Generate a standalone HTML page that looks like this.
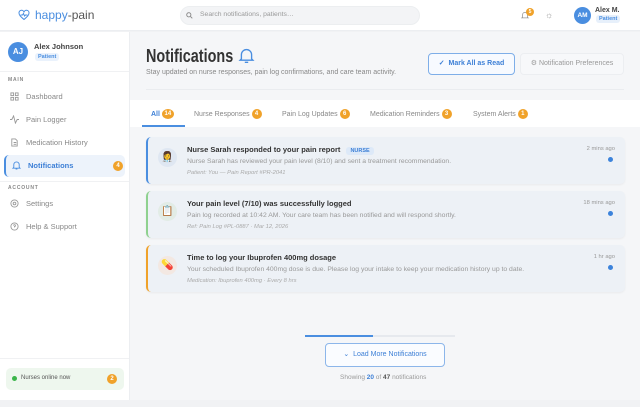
<!DOCTYPE html>
<html><head><style>
*{box-sizing:border-box;margin:0;padding:0}
body{width:640px;height:407px;overflow:hidden;font-family:"Liberation Sans",sans-serif;background:#f1f2f4;position:relative;color:#333}
.hdr{position:absolute;left:0;top:0;width:640px;height:31px;background:#fff;border-bottom:1px solid #eceef1}
.side{position:absolute;left:0;top:32px;width:130px;height:368px;background:#fff;border-right:1px solid #eceef1}
.main{position:absolute;left:130px;top:32px;width:510px;height:368px;background:#f5f6f8}
.a{position:absolute}
.badge{display:inline-block;background:#f0a22a;color:#fff;border-radius:50%;width:10px;height:10px;font-size:6px;line-height:10px;text-align:center;font-weight:bold;vertical-align:middle}
.nav{position:absolute;left:4px;width:121px;height:22px;font-size:7.5px;color:#888;line-height:22px;padding-left:22px}
.nav svg{position:absolute;left:6px;top:6px}
.card{position:absolute;left:146px;width:479px;height:47px;background:#edf1f6;border-radius:5px;box-shadow:0 1px 2px rgba(0,0,0,.05)}
.card .ic{position:absolute;left:10px;top:11px;width:19px;height:19px;border-radius:50%;font-size:10px;text-align:center;line-height:19px}
.card .t{position:absolute;left:39px;top:8px;font-size:7.5px;font-weight:bold;color:#333}
.card .d{position:absolute;left:39px;top:21px;font-size:6.8px;color:#999}
.card .m{position:absolute;left:39px;top:33px;font-size:5.8px;color:#aaa;font-style:italic}
.card .tm{position:absolute;right:10px;top:9px;font-size:5.8px;color:#999}
.card .dot{position:absolute;right:12px;top:20px;width:5px;height:5px;border-radius:50%;background:#3c83db}
.tab{position:absolute;top:109px;font-size:7px;color:#888}
</style></head><body>
<div class="hdr">
 <svg class="a" style="left:18px;top:9px" width="12" height="12" viewBox="0 0 24 24" fill="none" stroke="#4a8ee0" stroke-width="2"><path d="M12 21C5 15 2 12 2 8a5 5 0 0 1 10-1 5 5 0 0 1 10 1c0 4-3 7-10 13z"/><path d="M5 12h4l2-3 2 5 2-2h4"/></svg>
 <div class="a" style="left:35px;top:8px;font-size:12px;color:#555"><span style="color:#4a8ee0">happy</span>-pain</div>
 <div class="a" style="left:180px;top:6px;width:240px;height:19px;background:#f3f4f6;border-radius:10px;border:1px solid #eceef0"></div>
 <svg class="a" style="left:186px;top:12px" width="7" height="7" viewBox="0 0 10 10" fill="none" stroke="#888" stroke-width="1.3"><circle cx="4" cy="4" r="3"/><path d="M6.5 6.5L9 9"/></svg>
 <div class="a" style="left:200px;top:11px;font-size:6.8px;color:#999">Search notifications, patients…</div>
 <svg class="a" style="left:521px;top:11px" width="8" height="9" viewBox="0 0 10 10" fill="none" stroke="#999" stroke-width="1"><path d="M2 7V4a3 3 0 0 1 6 0v3l1 1H1z"/></svg>
 <div class="a badge" style="left:526px;top:8px;width:8px;height:8px;line-height:8px;font-size:5px">5</div>
 <div class="a" style="left:545px;top:11px;font-size:9px;color:#999;line-height:9px">☼</div>
 <div class="a" style="left:574px;top:7px;width:17px;height:17px;border-radius:50%;background:#4a8ee0;color:#fff;font-size:6.5px;font-weight:bold;text-align:center;line-height:17px">AM</div>
 <div class="a" style="left:595px;top:7px;font-size:7px;font-weight:bold;color:#444">Alex M.</div>
 <div class="a" style="left:596px;top:15px;font-size:5.5px;color:#4a8ee0;background:#e7f0fb;padding:1px 3px;border-radius:3px;font-weight:bold">Patient</div>
</div>
<div class="side">
 <div class="a" style="left:8px;top:10px;width:20px;height:20px;border-radius:50%;background:#4a8ee0;color:#fff;font-size:8px;font-weight:bold;text-align:center;line-height:20px">AJ</div>
 <div class="a" style="left:34px;top:10px;font-size:7.5px;font-weight:bold;color:#444">Alex Johnson</div>
 <div class="a" style="left:35px;top:21px;font-size:5.5px;color:#4a8ee0;background:#eaf2fc;padding:1px 3px;border-radius:3px;font-weight:bold">Patient</div>
 <div class="a" style="left:0;top:39px;width:129px;border-top:1px solid #f0f1f3"></div>
 <div class="a" style="left:8px;top:45px;font-size:5px;color:#888;letter-spacing:.8px;font-weight:bold">MAIN</div>
 <div class="nav" style="top:54px"><svg width="9" height="9" viewBox="0 0 10 10" fill="none" stroke="#999"><rect x="1" y="1" width="3" height="3"/><rect x="6" y="1" width="3" height="3"/><rect x="1" y="6" width="3" height="3"/><rect x="6" y="6" width="3" height="3"/></svg>Dashboard</div>
 <div class="nav" style="top:77px"><svg width="9" height="9" viewBox="0 0 10 10" fill="none" stroke="#999"><path d="M0 5h2l2-4 2 8 2-4h2"/></svg>Pain Logger</div>
 <div class="nav" style="top:100px"><svg width="9" height="9" viewBox="0 0 10 10" fill="none" stroke="#999"><path d="M2 1h4l2 2v6H2z M4 5h3M4 7h3"/></svg>Medication History</div>
 <div class="nav" style="top:123px;background:#edf3fb;border-radius:5px;color:#3c7fd6;font-weight:bold;border-left:2px solid #4a8ee0"><svg width="9" height="9" viewBox="0 0 10 10" fill="none" stroke="#4a8ee0"><path d="M2 7V4a3 3 0 0 1 6 0v3l1 1H1z M4 9h2"/></svg>Notifications<span class="badge a" style="left:107px;top:6px">4</span></div>
 <div class="a" style="left:0;top:149px;width:129px;border-top:1px solid #f0f1f3"></div>
 <div class="a" style="left:8px;top:153px;font-size:5px;color:#888;letter-spacing:.8px;font-weight:bold">ACCOUNT</div>
 <div class="nav" style="top:161px"><svg width="9" height="9" viewBox="0 0 10 10" fill="none" stroke="#999"><circle cx="5" cy="5" r="4"/><circle cx="5" cy="5" r="1.5"/></svg>Settings</div>
 <div class="nav" style="top:184px"><svg width="9" height="9" viewBox="0 0 10 10" fill="none" stroke="#999"><circle cx="5" cy="5" r="4"/><path d="M4 4a1 1 0 1 1 1 1v1"/></svg>Help &amp; Support</div>
 <div class="a" style="left:0;top:326px;width:129px;border-top:1px solid #f0f1f3"></div>
 <div class="a" style="left:6px;top:336px;width:118px;height:22px;background:#eef7ee;border-radius:5px"></div>
 <div class="a" style="left:12px;top:344px;width:5px;height:5px;border-radius:50%;background:#3bb54a"></div>
 <div class="a" style="left:21px;top:343px;font-size:6px;color:#555">Nurses online now</div>
 <div class="a badge" style="left:107px;top:342px">2</div>
</div>
<div class="main"></div>
<div class="a" style="left:146px;top:46px;font-size:18px;font-weight:bold;color:#333;transform:scaleX(0.8);transform-origin:0 0;white-space:nowrap">Notifications</div>
<svg class="a" style="left:238px;top:47px" width="17" height="17" viewBox="0 0 20 20" fill="none" stroke="#4a8ee0" stroke-width="1.6"><path d="M4 14V9a6 6 0 0 1 12 0v5l1.5 1.5h-15z M8 18h4"/></svg>
<div class="a" style="left:146px;top:69px;font-size:7px;color:#888">Stay updated on nurse responses, pain log confirmations, and care team activity.</div>
<div class="a" style="left:428px;top:53px;width:87px;height:22px;border:1px solid #7eaee8;border-radius:4px;background:#f7faff;font-size:7px;color:#3c7fd6;font-weight:bold;text-align:center;line-height:20px">✓&nbsp; Mark All as Read</div>
<div class="a" style="left:520px;top:53px;width:104px;height:22px;border:1px solid #eceef1;border-radius:4px;background:#f7f8fa;font-size:7px;color:#999;text-align:center;line-height:20px">⚙ Notification Preferences</div>
<div class="a" style="left:146px;top:89px;width:478px;border-top:1px solid #eaecef"></div>
<div class="a" style="left:130px;top:100px;width:510px;height:27px;background:#fff"></div>
<div class="a" style="left:142px;top:125px;width:43px;height:2px;background:#4a8ee0"></div>
<div class="tab" style="left:151px;color:#3c7fd6;font-weight:bold">All <span class="badge" style="width:12px">14</span></div>
<div class="tab" style="left:194px">Nurse Responses <span class="badge">4</span></div>
<div class="tab" style="left:282px">Pain Log Updates <span class="badge">6</span></div>
<div class="tab" style="left:370px">Medication Reminders <span class="badge">3</span></div>
<div class="tab" style="left:473px">System Alerts <span class="badge">1</span></div>

<div class="card" style="top:137px;border-left:2px solid #4a8ee0"><div class="ic" style="background:#dfe7f2">👩‍⚕️</div><div class="t">Nurse Sarah responded to your pain report <span style="font-size:5.5px;color:#3c7fd6;background:#dde9f8;padding:1px 4px;border-radius:3px;margin-left:4px">NURSE</span></div><div class="d">Nurse Sarah has reviewed your pain level (8/10) and sent a treatment recommendation.</div><div class="m">Patient: You — Pain Report #PR-2041</div><div class="tm">2 mins ago</div><div class="dot"></div></div>
<div class="card" style="top:191px;border-left:2px solid #8fd18f"><div class="ic" style="background:#e2ece6">📋</div><div class="t">Your pain level (7/10) was successfully logged</div><div class="d">Pain log recorded at 10:42 AM. Your care team has been notified and will respond shortly.</div><div class="m">Ref: Pain Log #PL-0887 · Mar 12, 2026</div><div class="tm">18 mins ago</div><div class="dot"></div></div>
<div class="card" style="top:245px;border-left:2px solid #f0a22a"><div class="ic" style="background:#f3e8e2">💊</div><div class="t">Time to log your Ibuprofen 400mg dosage</div><div class="d">Your scheduled Ibuprofen 400mg dose is due. Please log your intake to keep your medication history up to date.</div><div class="m">Medication: Ibuprofen 400mg · Every 8 hrs</div><div class="tm">1 hr ago</div><div class="dot"></div></div>

<div class="a" style="left:305px;top:335px;width:150px;height:2px;background:#e6e9ee"></div>
<div class="a" style="left:305px;top:335px;width:68px;height:2px;background:#4a8ee0"></div>
<div class="a" style="left:325px;top:343px;width:120px;height:24px;border:1px solid #8cb6ea;border-radius:4px;background:#fafcff;font-size:7px;color:#3c7fd6;text-align:center;line-height:22px">⌄&nbsp; Load More Notifications</div>
<div class="a" style="left:340px;top:374px;font-size:6.5px;color:#999">Showing <b style="color:#3c7fd6">20</b> of <b style="color:#555">47</b> notifications</div>
</body></html>
